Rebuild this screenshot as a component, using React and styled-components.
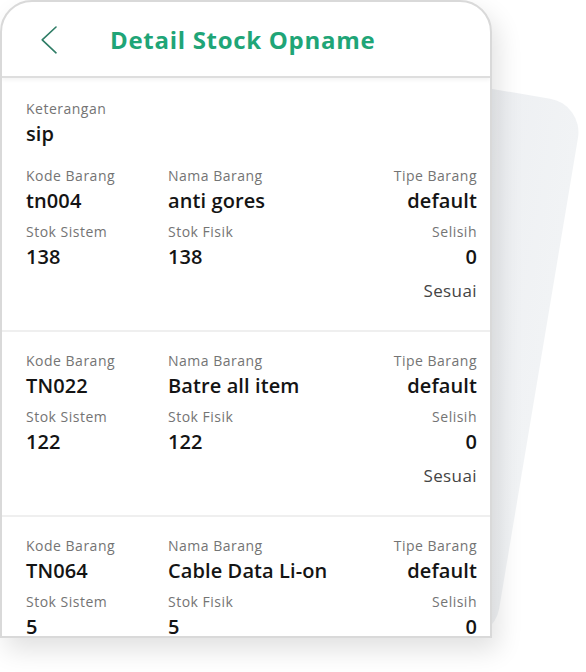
import React from "react";
import styled, { createGlobalStyle } from "styled-components";

const items = [
  { kode: "tn004", nama: "anti gores", tipe: "default", sistem: 138, fisik: 138, selisih: 0, status: "Sesuai" },
  { kode: "TN022", nama: "Batre all item", tipe: "default", sistem: 122, fisik: 122, selisih: 0, status: "Sesuai" },
  { kode: "TN064", nama: "Cable Data Li-on", tipe: "default", sistem: 5, fisik: 5, selisih: 0, status: "Sesuai" },
];

const App = () => {
  return (
    <>
      <GlobalStyle />
      <Stage>
        <BackCard />
        <Phone>
          <Header>
            <BackButton aria-label="back">
              <svg width="16" height="28" viewBox="0 0 16 28" fill="none">
                <polyline points="15,1 1.2,13.8 15,26.8" stroke="#2f7d66" strokeWidth="1.6" strokeLinecap="round" strokeLinejoin="round" />
              </svg>
            </BackButton>
            <Title>Detail Stock Opname</Title>
          </Header>
          <Body>
            {items.map((item, i) => (
              <Section key={item.kode}>
                {i === 0 && (
                  <Note>
                    <Label>Keterangan</Label>
                    <Value>sip</Value>
                  </Note>
                )}
                <Grid>
                  <Field>
                    <Label>Kode Barang</Label>
                    <Value>{item.kode}</Value>
                  </Field>
                  <Field>
                    <Label>Nama Barang</Label>
                    <Value>{item.nama}</Value>
                  </Field>
                  <Field $right>
                    <Label>Tipe Barang</Label>
                    <Value>{item.tipe}</Value>
                  </Field>
                  <Field>
                    <Label>Stok Sistem</Label>
                    <Value>{item.sistem}</Value>
                  </Field>
                  <Field>
                    <Label>Stok Fisik</Label>
                    <Value>{item.fisik}</Value>
                  </Field>
                  <Field $right>
                    <Label>Selisih</Label>
                    <Value>{item.selisih}</Value>
                  </Field>
                </Grid>
                <Status>{item.status}</Status>
              </Section>
            ))}
          </Body>
        </Phone>
      </Stage>
    </>
  );
};

export default App;

const GlobalStyle = createGlobalStyle`
  html, body {
    margin: 0;
    padding: 0;
    background: #ffffff;
    font-family: "Open Sans", "Noto Sans", sans-serif;
  }
`;

const Stage = styled.div`
  position: relative;
  width: 586px;
  height: 672px;
  overflow: hidden;
  background: #ffffff;
`;

// tilted sheet behind the phone
const BackCard = styled.div`
  position: absolute;
  left: 340px;
  top: 84px;
  width: 200px;
  height: 545px;
  border-radius: 34px;
  background: linear-gradient(90deg, #e4e7ea 0%, #eceef1 40%, #f1f3f5 100%);
  transform: rotate(9.5deg);
`;

const Phone = styled.div`
  position: relative;
  z-index: 1;
  box-sizing: border-box;
  width: 492px;
  height: 638px;
  background: #ffffff;
  border: 2px solid #d9d9d9;
  border-radius: 32px 32px 0 0;
  overflow: hidden;
  box-shadow: 6px 12px 26px rgba(0, 0, 0, 0.12);
`;

const Header = styled.div`
  display: flex;
  align-items: center;
  height: 74px;
  padding-left: 39px;
  gap: 53px;
  border-bottom: 2px solid #dedede;
  box-shadow: 0 2px 4px rgba(0, 0, 0, 0.05);
`;

const BackButton = styled.div`
  display: flex;
  width: 16px;
  height: 28px;
  margin-top: 1px;
`;

const Title = styled.h1`
  margin: 0;
  margin-top: 1px;
  font-size: 24px;
  font-weight: 700;
  letter-spacing: 0.7px;
  line-height: 32px;
  color: #1fa577;
`;

const Body = styled.div`
  padding: 0;
`;

const Section = styled.div`
  padding: 20px 13px 28px 24px;
  border-top: 2px solid #efefef;

  &:first-child {
    border-top: none;
    padding-top: 22px;
  }
`;

const Note = styled.div`
  display: flex;
  flex-direction: column;
  gap: 4px;
  margin-bottom: 21px;
`;

const Grid = styled.div`
  display: grid;
  grid-template-columns: 142px 1fr auto;
  row-gap: 10px;
`;

const Field = styled.div`
  display: flex;
  flex-direction: column;
  gap: 4px;
  text-align: ${(p) => (p.$right ? "right" : "left")};
`;

const Label = styled.div`
  font-size: 14px;
  line-height: 18px;
  letter-spacing: 0.5px;
  color: #747474;
`;

const Value = styled.div`
  font-size: 20px;
  line-height: 24px;
  font-weight: 600;
  letter-spacing: 0.1px;
  color: #141414;
`;

const Status = styled.div`
  margin-top: 11px;
  text-align: right;
  font-size: 17px;
  line-height: 22px;
  font-weight: 500;
  letter-spacing: 0.4px;
  color: #444444;
`;
